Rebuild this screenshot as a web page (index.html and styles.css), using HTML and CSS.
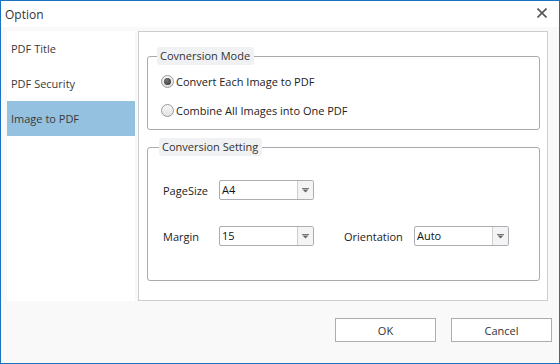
FILE: index.html
```html
<!DOCTYPE html>
<html>
<head>
<meta charset="utf-8">
<link rel="stylesheet" href="styles.css">
</head>
<body>
<div class="window">
  <div class="titlebar">
    <span class="title">Option</span>
    <svg class="close" width="10" height="10" viewBox="0 0 10 10"><path d="M0.5 0.5 L9.5 9.5 M9.5 0.5 L0.5 9.5" stroke="#555" stroke-width="1.6" fill="none"/></svg>
  </div>
  <div class="main">
    <ul class="sidebar">
      <li class="nav-item">PDF Title</li>
      <li class="nav-item">PDF Security</li>
      <li class="nav-item selected">Image to PDF</li>
    </ul>
    <div class="panel">
      <fieldset class="group group-mode">
        <legend>Covnersion Mode</legend>
        <label class="radio-row"><span class="radio checked"></span><span>Convert Each Image to PDF</span></label>
        <label class="radio-row"><span class="radio"></span><span>Combine All Images into One PDF</span></label>
      </fieldset>
      <fieldset class="group group-setting">
        <legend>Conversion Setting</legend>
        <div class="form-row">
          <span class="label">PageSize</span>
          <div class="combo"><span class="combo-value">A4</span><span class="combo-btn"><svg width="7" height="5" viewBox="0 0 7 5"><path d="M0 0.5 H7" stroke="#777" stroke-width="1"/><path d="M0.5 1.5 L6.5 1.5 L3.5 4.5 Z" fill="#666"/></svg></span></div>
        </div>
        <div class="form-row">
          <span class="label">Margin</span>
          <div class="combo"><span class="combo-value">15</span><span class="combo-btn"><svg width="7" height="5" viewBox="0 0 7 5"><path d="M0 0.5 H7" stroke="#777" stroke-width="1"/><path d="M0.5 1.5 L6.5 1.5 L3.5 4.5 Z" fill="#666"/></svg></span></div>
          <span class="label label-wide">Orientation</span>
          <div class="combo"><span class="combo-value">Auto</span><span class="combo-btn"><svg width="7" height="5" viewBox="0 0 7 5"><path d="M0 0.5 H7" stroke="#777" stroke-width="1"/><path d="M0.5 1.5 L6.5 1.5 L3.5 4.5 Z" fill="#666"/></svg></span></div>
        </div>
      </fieldset>
    </div>
  </div>
  <div class="footer">
    <button class="btn">OK</button>
    <button class="btn">Cancel</button>
  </div>
</div>
</body>
</html>
```
FILE: styles.css
```css
* { box-sizing: border-box; }
html, body { margin: 0; padding: 0; }
body {
  font-family: "Open Sans", "Noto Sans", sans-serif;
  font-size: 11px;
  color: #333;
  background: #fff;
}
.window {
  width: 560px;
  height: 364px;
  border: 1px solid #1b72c0;
  background: #f9f9f9;
  display: flex;
  flex-direction: column;
}
.titlebar {
  height: 26px;
  background: #fff;
  display: flex;
  align-items: center;
  justify-content: space-between;
  padding: 0 12px 0 4px;
}
.title {
  font-size: 12px;
  color: #333;
  line-height: 16px;
  margin-top: 1px;
}
.close { margin-top: -2px; }
.main {
  display: flex;
  gap: 3px;
  padding: 4px 11px 0 6px;
  height: 274px;
}
.sidebar {
  list-style: none;
  margin: 0;
  padding: 0;
  width: 128px;
  height: 270px;
  background: #fff;
}
.nav-item {
  height: 35px;
  line-height: 35px;
  padding-left: 4px;
  font-size: 11px;
  color: #3a3a3a;
}
.nav-item.selected { background: #95c1e0; }
.panel {
  flex: 1;
  height: 270px;
  border: 1px solid #cdcdcd;
  background: #fff;
  padding: 15px 7px 0 8px;
}
.group {
  margin: 0;
  border: 1px solid #a9a9b0;
  border-radius: 3px;
  padding: 0 0 0 13px;
  min-width: 0;
}
.group legend {
  margin-left: -4px;
  padding: 0 4px 0 3px;
  height: 18px;
  line-height: 18px;
  background: #f0f1f2;
  border-radius: 3px;
  font-size: 11px;
  color: #333;
}
.group-mode {
  padding-top: 6px;
  padding-bottom: 9px;
  display: flex;
  flex-direction: column;
  gap: 9px;
}
.radio-row {
  display: flex;
  align-items: center;
  gap: 2px;
  height: 20px;
  color: #222;
}
.radio {
  width: 13px;
  height: 13px;
  border-radius: 50%;
  border: 1px solid #9a9a9a;
  background: linear-gradient(#f6f6f6, #e2e2e2);
  display: inline-flex;
  align-items: center;
  justify-content: center;
}
.radio.checked::after {
  content: "";
  width: 7px;
  height: 7px;
  border-radius: 50%;
  background: radial-gradient(circle at 40% 35%, #777, #2a2a2a);
}
.group-setting {
  margin-top: 8px;
  padding: 24px 0 34px 15px;
  display: flex;
  flex-direction: column;
  gap: 26px;
}
.form-row {
  display: flex;
  align-items: center;
  height: 20px;
  color: #222;
}
.label { width: 56px; }
.label-wide { width: 70px; margin-left: 30px; }
.combo {
  width: 95px;
  height: 20px;
  border: 1px solid #abadb3;
  border-radius: 2px;
  background: #fff;
  display: flex;
}
.combo-value {
  flex: 1;
  padding-left: 2px;
  line-height: 18px;
  color: #111;
}
.combo-btn {
  width: 16px;
  border-left: 1px solid #cfcfcf;
  background: #f4f4f4;
  display: flex;
  align-items: center;
  justify-content: center;
}
.footer {
  display: flex;
  justify-content: flex-end;
  gap: 15px;
  padding: 17px 7px 0 0;
}
.btn {
  width: 101px;
  height: 24px;
  border: 1px solid #adadad;
  background: #fff;
  font-family: "Open Sans", "Noto Sans", sans-serif;
  font-size: 11px;
  color: #333;
  padding: 0;
}
```
